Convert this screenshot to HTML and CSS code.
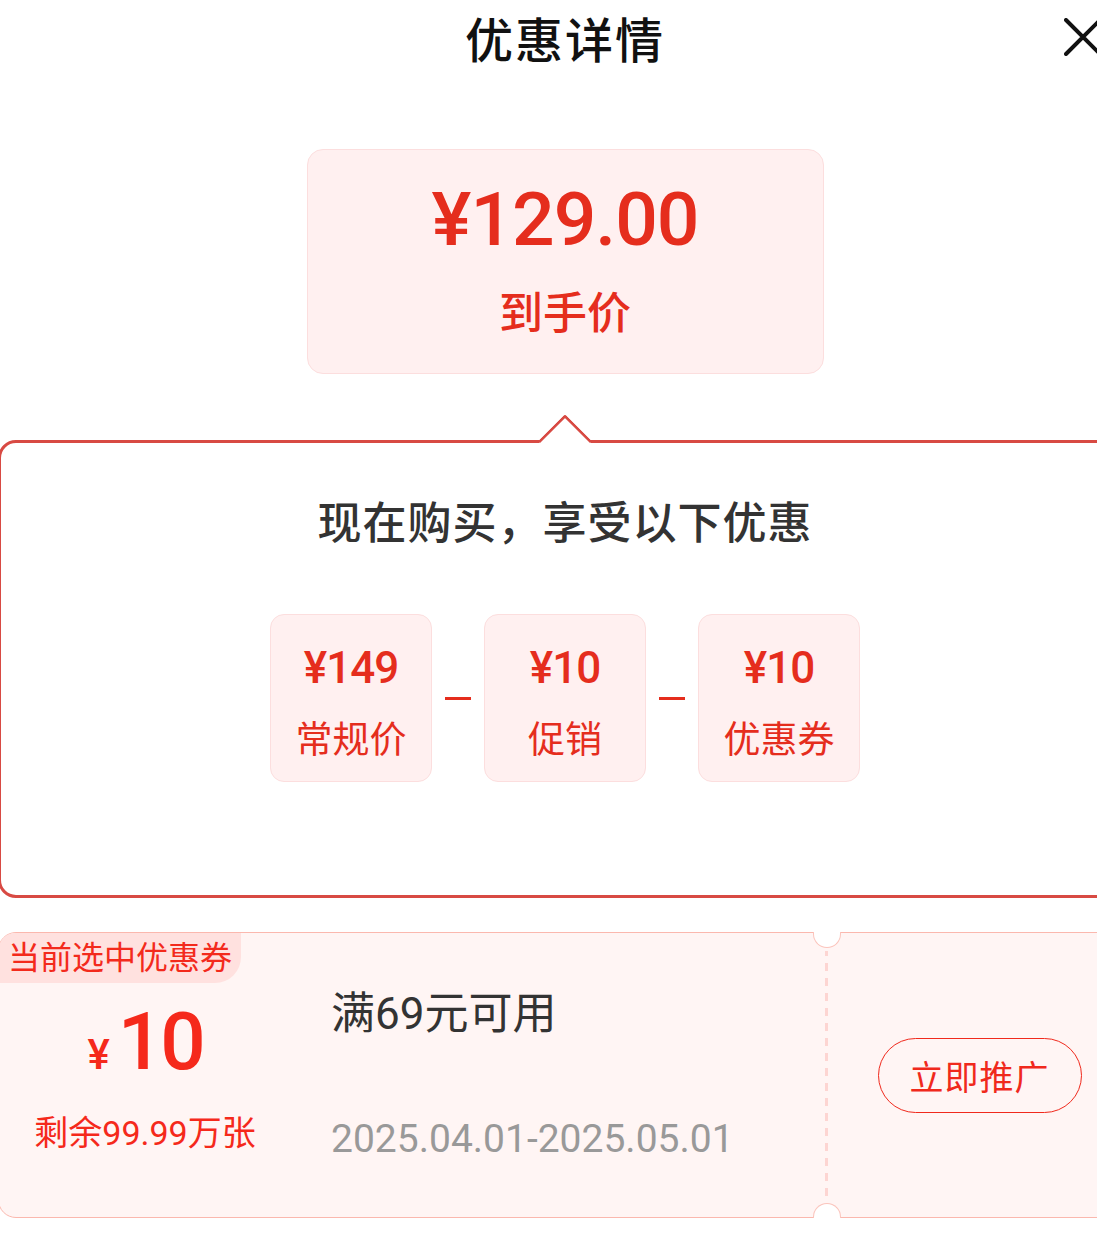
FILE: index.html
```html
<!DOCTYPE html>
<html lang="zh-CN">
<head>
    <meta charset="UTF-8">
    <meta name="viewport" content="width=device-width, initial-scale=1.0">
    <title>优惠详情</title>
    <link rel="stylesheet" href="styles.css">
</head>
<body>
    <div class="sheet">
        <header class="sheet-header">
            <span></span>
            <h1 class="sheet-title">优惠详情</h1>
            <button class="close-btn" aria-label="关闭">
                <svg viewBox="0 0 38 38" width="38" height="38">
                    <path d="M2 2 L36 36 M36 2 L2 36" stroke="#111" stroke-width="4" stroke-linecap="round" fill="none"/>
                </svg>
            </button>
        </header>

        <div class="final-price">
            <div class="final-price-value">¥129.00</div>
            <div class="final-price-label">到手价</div>
        </div>

        <section class="breakdown">
            <h2 class="breakdown-title">现在购买，享受以下优惠</h2>
            <div class="breakdown-row">
                <div class="breakdown-item">
                    <div class="breakdown-amount">¥149</div>
                    <div class="breakdown-label">常规价</div>
                </div>
                <span class="minus"></span>
                <div class="breakdown-item">
                    <div class="breakdown-amount">¥10</div>
                    <div class="breakdown-label">促销</div>
                </div>
                <span class="minus"></span>
                <div class="breakdown-item">
                    <div class="breakdown-amount">¥10</div>
                    <div class="breakdown-label">优惠券</div>
                </div>
            </div>
        </section>

        <section class="coupon">
            <div class="coupon-tag">当前选中优惠券</div>
            <div class="coupon-value">
                <div class="coupon-amount"><span class="coupon-yen">¥</span><span>10</span></div>
                <div class="coupon-stock">剩余99.99万张</div>
            </div>
            <div class="coupon-info">
                <div class="coupon-rule">满69元可用</div>
                <div class="coupon-date">2025.04.01-2025.05.01</div>
            </div>
            <div class="coupon-cut"></div>
            <div class="coupon-action">
                <button class="promote-btn">立即推广</button>
            </div>
        </section>
    </div>
</body>
</html>
```

FILE: styles.css
```css
body {
    margin: 0;
    background: #fff;
    overflow: hidden;
    font-family: Roboto, "Noto Sans CJK SC", sans-serif;
    color: #333;
}
.sheet {
    width: 1134px;
    margin-left: -2px;
}
.sheet-header {
    height: 74px;
    display: grid;
    grid-template-columns: 1fr auto 1fr;
    align-items: center;
}
.sheet-title {
    margin: 0;
    font-family: "Noto Sans CJK SC", sans-serif;
    font-size: 48px;
    font-weight: 500;
    letter-spacing: 2px;
    line-height: 74px;
    color: #111;
}
.close-btn {
    justify-self: end;
    margin-right: 30px;
    width: 38px;
    height: 38px;
    padding: 0;
    border: none;
    background: none;
    display: flex;
}
.final-price {
    width: 517px;
    height: 225px;
    box-sizing: border-box;
    margin: 75px auto 0;
    padding-top: 29px;
    background: #fff0f0;
    border: 1px solid #fcdede;
    border-radius: 16px;
    text-align: center;
    color: #e52d1d;
}
.final-price-value {
    font-family: Roboto, sans-serif;
    font-weight: 500;
    font-size: 75px;
    line-height: 80px;
    letter-spacing: -1px;
}
.final-price-label {
    margin-top: 23px;
    font-family: "Noto Sans CJK SC", sans-serif;
    font-size: 44px;
    font-weight: 500;
    line-height: 56px;
}
.breakdown {
    position: relative;
    margin-top: 66px;
    height: 458px;
    box-sizing: border-box;
    padding-top: 47px;
    border: 3px solid #d84a43;
    border-radius: 18px;
    background: #fff;
}
.breakdown::before {
    content: "";
    position: absolute;
    top: -21px;
    left: calc(50% - 19px);
    width: 38px;
    height: 38px;
    box-sizing: border-box;
    background: #fff;
    border-top: 3px solid #d84a43;
    border-left: 3px solid #d84a43;
    border-top-left-radius: 3px;
    transform: rotate(45deg);
}
.breakdown-title {
    margin: 0;
    text-align: center;
    font-family: "Noto Sans CJK SC", sans-serif;
    font-size: 44px;
    font-weight: 500;
    line-height: 60px;
    letter-spacing: 1px;
    color: #333;
}
.breakdown-row {
    margin-top: 64px;
    display: flex;
    justify-content: center;
    align-items: center;
}
.breakdown-item {
    width: 162px;
    height: 168px;
    box-sizing: border-box;
    padding-top: 25px;
    background: #fff0f0;
    border: 1px solid #fcdede;
    border-radius: 14px;
    text-align: center;
    color: #e52d1d;
}
.breakdown-amount {
    font-family: Roboto, sans-serif;
    font-weight: 500;
    font-size: 44px;
    line-height: 56px;
    letter-spacing: -1px;
}
.breakdown-label {
    margin-top: 17px;
    font-family: "Noto Sans CJK SC", sans-serif;
    font-size: 37px;
    line-height: 48px;
}
.minus {
    width: 26px;
    height: 3px;
    margin: 0 13px;
    background: #e52d1d;
}
.coupon {
    position: relative;
    margin-top: 34px;
    height: 286px;
    box-sizing: border-box;
    display: flex;
    background: #fff5f4;
    border: 1.5px solid #fbb8ae;
    border-radius: 18px;
}
.coupon-tag {
    position: absolute;
    top: 0;
    left: 0;
    width: 242px;
    height: 50px;
    line-height: 44px;
    text-align: center;
    font-family: "Noto Sans CJK SC", sans-serif;
    font-size: 32px;
    color: #f32a1c;
    background: #ffe1df;
    border-radius: 16px 0 26px 0;
}
.coupon-value {
    width: 292px;
    padding-top: 64px;
    display: flex;
    flex-direction: column;
    align-items: center;
    color: #f5291b;
}
.coupon-amount {
    height: 90px;
    display: flex;
    align-items: baseline;
    font-family: Roboto, sans-serif;
    font-weight: 500;
    font-size: 80px;
    line-height: 90px;
    letter-spacing: -3px;
}
.coupon-yen {
    margin-right: 8px;
    font-size: 42px;
    letter-spacing: 0;
}
.coupon-stock {
    margin-top: 26px;
    font-size: 34px;
    line-height: 40px;
}
.coupon-info {
    flex: 1;
    padding: 53px 0 0 40px;
}
.coupon-rule {
    font-size: 44px;
    line-height: 56px;
    color: #333;
}
.coupon-date {
    margin-top: 72px;
    font-size: 39px;
    line-height: 50px;
    color: #999;
}
.coupon-cut {
    position: relative;
    width: 3px;
    padding: 18px 0 14px;
    background: repeating-linear-gradient(to bottom, #fdd5d2 0 8px, transparent 8px 15px);
    background-clip: content-box;
}
.coupon-cut::before,
.coupon-cut::after {
    content: "";
    position: absolute;
    left: 50%;
    width: 28px;
    height: 16px;
    box-sizing: border-box;
    margin-left: -14px;
    background: #fff;
    border: 1.5px solid #fbc4bc;
}
.coupon-cut::before {
    top: -1.5px;
    border-top: none;
    border-radius: 0 0 14px 14px;
}
.coupon-cut::after {
    bottom: -1.5px;
    border-bottom: none;
    border-radius: 14px 14px 0 0;
}
.coupon-action {
    width: 303px;
    display: flex;
    align-items: center;
    justify-content: center;
}
.promote-btn {
    width: 204px;
    height: 75px;
    padding: 0;
    background: none;
    border: 1.5px solid #f0291c;
    border-radius: 38px;
    font-family: "Noto Sans CJK SC", sans-serif;
    font-size: 34px;
    letter-spacing: 1px;
    color: #f0291c;
}
```
